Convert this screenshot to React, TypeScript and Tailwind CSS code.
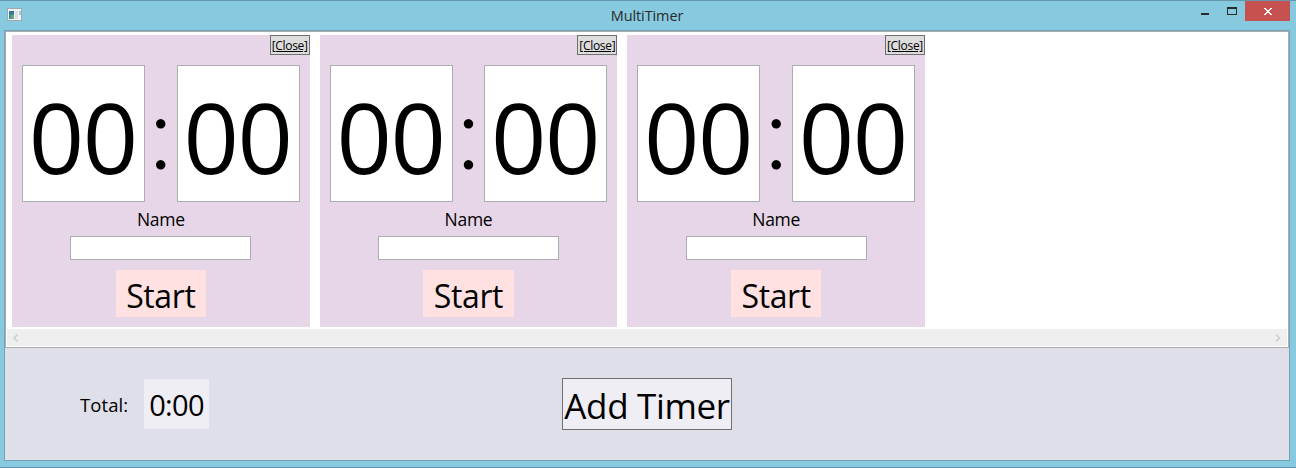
import React from 'react';

function TimeBox() {
  return (
    <div className="flex h-[137px] w-[123px] shrink-0 justify-center border border-[#abadb3] bg-white text-[97px] leading-[141px] tracking-[-1.5px]">
      <span className="mr-[1.5px] block h-[135px]">00</span>
    </div>
  );
}

function TimerCard() {
  return (
    <section className="flex h-[292px] w-[297.67px] shrink-0 flex-col items-center bg-[#e6d6e7]">
      <div className="flex w-full justify-end">
        <button className="h-5 w-10 border border-[#707070] bg-[#dddddd] text-center text-[12px] leading-[20px] tracking-[-0.3px] whitespace-nowrap underline">
          [Close]
        </button>
      </div>
      <div className="mt-[10px] flex w-[277.67px]">
        <TimeBox />
        <div className="flex h-[137px] flex-1 justify-center font-['Lato'] text-[102px] leading-[130px] font-light">
          :
        </div>
        <TimeBox />
      </div>
      <label className="mt-[5px] h-[29px] text-[17.5px] leading-[25px] tracking-[-0.3px]">Name</label>
      <input className="h-6 w-[181px] border border-[#abadb3] bg-white outline-none" />
      <button className="mt-[10px] h-[47px] w-[90.4px] bg-[#ffe1e1] text-[32px] leading-[52px] tracking-[-0.4px]">
        Start
      </button>
    </section>
  );
}

function WindowIcon() {
  return (
    <svg width="16" height="14" viewBox="0 0 16 14" shapeRendering="crispEdges">
      <rect x="0.5" y="1.5" width="14" height="12" fill="#f4f4f6" stroke="#9da9b2" />
      <rect x="2" y="4" width="5" height="8" fill="#3f8a8d" />
      <rect x="2" y="4" width="5" height="3" fill="#39749b" />
      <rect x="4" y="8" width="3" height="4" fill="#62a97c" />
      <rect x="8" y="4" width="3" height="8" fill="#dddde2" />
      <rect x="12" y="4" width="2" height="4" fill="#a5cfc4" />
    </svg>
  );
}

export default function App() {
  return (
    <main className="flex h-[468px] w-[1296px] flex-col overflow-hidden border-y border-[#6497ac] bg-[#87c9df] font-['Open_Sans','Noto_Sans',sans-serif] text-black">
      <header className="flex h-[29px] shrink-0">
        <div className="w-[200px] pt-[6px] pl-[7px]">
          <WindowIcon />
        </div>
        <h1 className="flex-1 pr-[2px] text-center text-[14.5px] leading-[29px] tracking-[-0.1px] text-[#2a2a2a]">
          MultiTimer
        </h1>
        <div className="flex w-[200px] justify-end pr-[6px]">
          <svg width="195" height="20" viewBox="0 0 195 20" shapeRendering="crispEdges">
            <rect x="106" y="12" width="8" height="2" fill="#2a2a2a" />
            <path d="M132 6h10v8h-10zM133 8v5h8V8z" fill="#2a2a2a" fillRule="evenodd" />
            <rect x="150" width="45" height="20" fill="#c75050" />
            <path
              d="M169 7h2v1h1v1h2V8h1V7h2v1h-1v1h-1v1h-1v1h1v1h1v1h1v1h-2v-1h-1v-1h-2v1h-1v1h-2v-1h1v-1h1v-1h1v-1h-1V9h-1V8h-1z"
              fill="#fff"
            />
          </svg>
        </div>
      </header>
      <div className="ml-[4px] flex h-[431px] w-[1286px] flex-col border border-[#72a4b8] bg-[#dfdfe9]">
        <div className="flex h-[317px] shrink-0 flex-col border border-[#abadb3] bg-white p-px">
          <div className="flex h-[297px] gap-[10px] pt-[2px] pl-[5px]">
            <TimerCard />
            <TimerCard />
            <TimerCard />
          </div>
          <div className="mt-[-1px] flex h-[17px] items-center justify-between bg-[#efefef] px-[6px]">
            <svg width="6" height="8" viewBox="0 0 6 8" fill="none">
              <path d="M4.5 .5L1 4l3.500 3.500" stroke="#cfcfcf" strokeWidth="1.6" />
            </svg>
            <svg width="6" height="8" viewBox="0 0 6 8" fill="none">
              <path d="M1 .5L4.500 4L1 7.500" stroke="#cfcfcf" strokeWidth="1.6" />
            </svg>
          </div>
        </div>
        <footer className="flex flex-1 items-start pt-[30px]">
          <span className="w-[139px] pl-[75px] text-[18.500px] leading-[54px] tracking-[0.1px]">Total:</span>
          <output className="mt-px h-[50px] w-[65px] bg-[#efeef4] text-center text-[29px] leading-[52px] tracking-[-0.7px]">
            0:00
          </output>
          <button className="ml-[353px] h-[52px] w-[170px] border border-[#707070] bg-[#efeef4] text-center text-[35px] leading-[53px] tracking-[-0.35px] whitespace-nowrap">
            Add Timer
          </button>
        </footer>
      </div>
    </main>
  );
}
